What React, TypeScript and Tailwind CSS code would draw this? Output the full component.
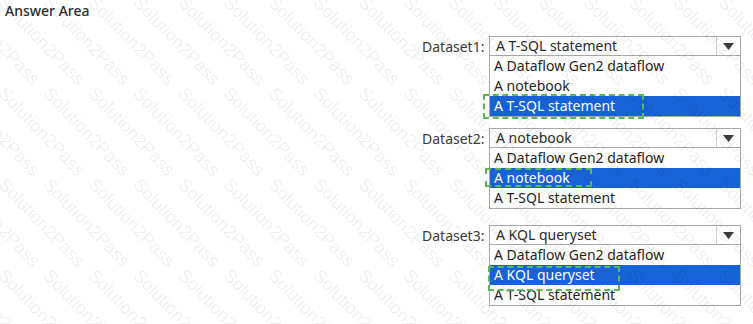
import React from 'react';

interface DropdownProps {
  label: string;
  value: string;
  options: string[];
  selected: number;
  mark: { left: number; top: number; width: number; height: number };
  className?: string;
}

const Dropdown: React.FC<DropdownProps> = ({ label, value, options, selected, mark, className }) => {
  return (
    <div className={`flex ${className ?? ''}`}>
      <div className="w-[69px] h-[20px] flex items-center pl-[2px] text-[14px] text-[#3a3a3a]">
        {label}
      </div>
      <div className="relative w-[252px]">
        {/* Header */}
        <div className="h-[20px] flex border border-[#a8a8a8] bg-white">
          <div className="flex-1 pl-[6px] flex items-center text-[14px] text-[#2a2a2a] leading-none">{value}</div>
          <div className="w-[24px] border-l border-[#d0d0d0] flex items-center justify-center">
            <svg width="11" height="7" viewBox="0 0 11 7">
              <path d="M0 0H11L5.5 7Z" fill="#3c3c3c" />
            </svg>
          </div>
        </div>
        {/* List */}
        <div className="border border-t-0 border-[#a8a8a8] bg-white">
          {options.map((opt, i) => (
            <div
              key={opt}
              className={`h-[20px] pl-[4px] flex items-center text-[14px] leading-none ${
                i === selected ? 'bg-[#1762d6] text-white' : 'text-[#1f1f1f]'
              }`}
            >
              {opt}
            </div>
          ))}
        </div>
        {/* Answer marker */}
        <div
          className="absolute border-2 border-dashed border-[#5db75a]"
          style={{ left: mark.left, top: mark.top, width: mark.width, height: mark.height }}
        />
      </div>
    </div>
  );
};

const Watermark: React.FC = () => {
  const items: { x: number; y: number }[] = [];
  for (let j = -4; j < 5; j++) {
    for (let i = -8; i < 18; i++) {
      items.push({ x: 8 + i * 45, y: 84 + j * 91 });
    }
  }
  return (
    <div className="absolute inset-0 overflow-hidden pointer-events-none" aria-hidden="true">
      {items.map((p, k) => (
        <span
          key={k}
          className="absolute origin-top-left rotate-[46deg] whitespace-nowrap text-[18px] leading-none text-black/[0.07]"
          style={{ left: p.x, top: p.y, fontFamily: '"Liberation Sans", Arial, sans-serif' }}
        >
          Solution2Pass
        </span>
      ))}
    </div>
  );
};

export default function App() {
  const opts = ['A Dataflow Gen2 dataflow', 'A notebook', 'A T-SQL statement'];
  const opts3 = ['A Dataflow Gen2 dataflow', 'A KQL queryset', 'A T-SQL statement'];

  return (
    <div
      className="relative w-[753px] h-[324px] bg-white overflow-hidden"
      style={{ fontFamily: '"Noto Sans", "Open Sans", sans-serif' }}
    >
      <div className="pl-[5px] pt-[2px] text-[14px] font-medium text-[#2b2b2b] leading-[18px]">Answer Area</div>

      <div className="flex flex-col pl-[420px]">
        <Dropdown
          className="mt-[16px]"
          label="Dataset1:"
          value="A T-SQL statement"
          options={opts}
          selected={2}
          mark={{ left: -6, top: 58, width: 161, height: 25 }}
        />
        <Dropdown
          className="mt-[11px]"
          label="Dataset2:"
          value="A notebook"
          options={opts}
          selected={1}
          mark={{ left: -4, top: 40, width: 107, height: 19 }}
        />
        <Dropdown
          className="mt-[16px]"
          label="Dataset3:"
          value="A KQL queryset"
          options={opts3}
          selected={1}
          mark={{ left: -1, top: 41, width: 132, height: 25 }}
        />
      </div>

      <Watermark />
    </div>
  );
}
